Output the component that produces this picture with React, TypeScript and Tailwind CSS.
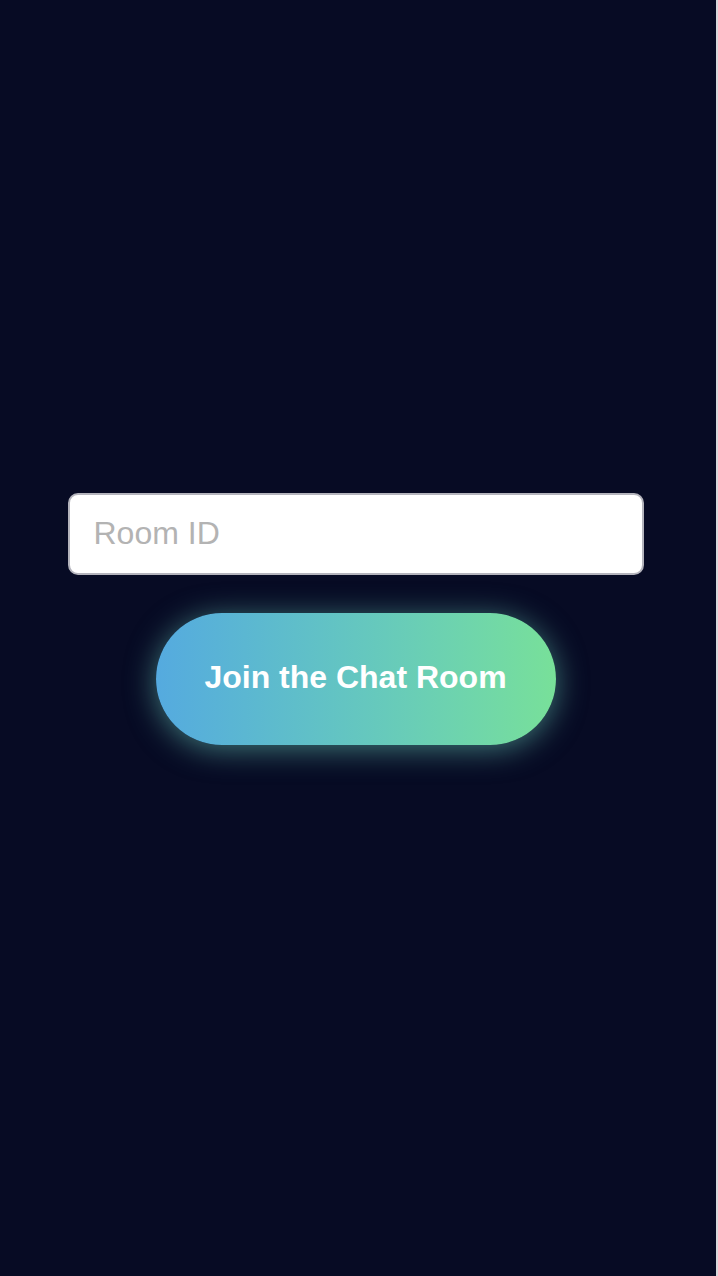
import { useState } from "react";

export default function App() {
	const [roomId, setRoomId] = useState("");

	return (
		<div className="flex min-h-screen w-full bg-[#070b24] font-['Liberation_Sans',Arial,sans-serif]">
			<div className="flex flex-1 flex-col items-center justify-center pb-[39px] pr-[5px]">
				{/* Room input */}
				<input
					value={roomId}
					onChange={(e) => setRoomId(e.target.value)}
					placeholder="Room ID"
					className="h-[82px] w-[576px] rounded-[10px] border-2 border-[#b4b4bc] bg-white px-6 text-[32px] text-[#222] outline-none placeholder:text-[#b3b3b3]"
				/>

				{/* Join button */}
				<button className="mt-[38px] h-[132px] w-[400px] rounded-full bg-gradient-to-r from-[#55aadf] to-[#78e099] pb-[3px] text-[32px] font-bold text-white shadow-[0_4px_30px_rgba(110,210,190,0.55)]">
					Join the Chat Room
				</button>
			</div>
			<div className="w-[2px] bg-[#d8d8dc]" />
		</div>
	);
}
